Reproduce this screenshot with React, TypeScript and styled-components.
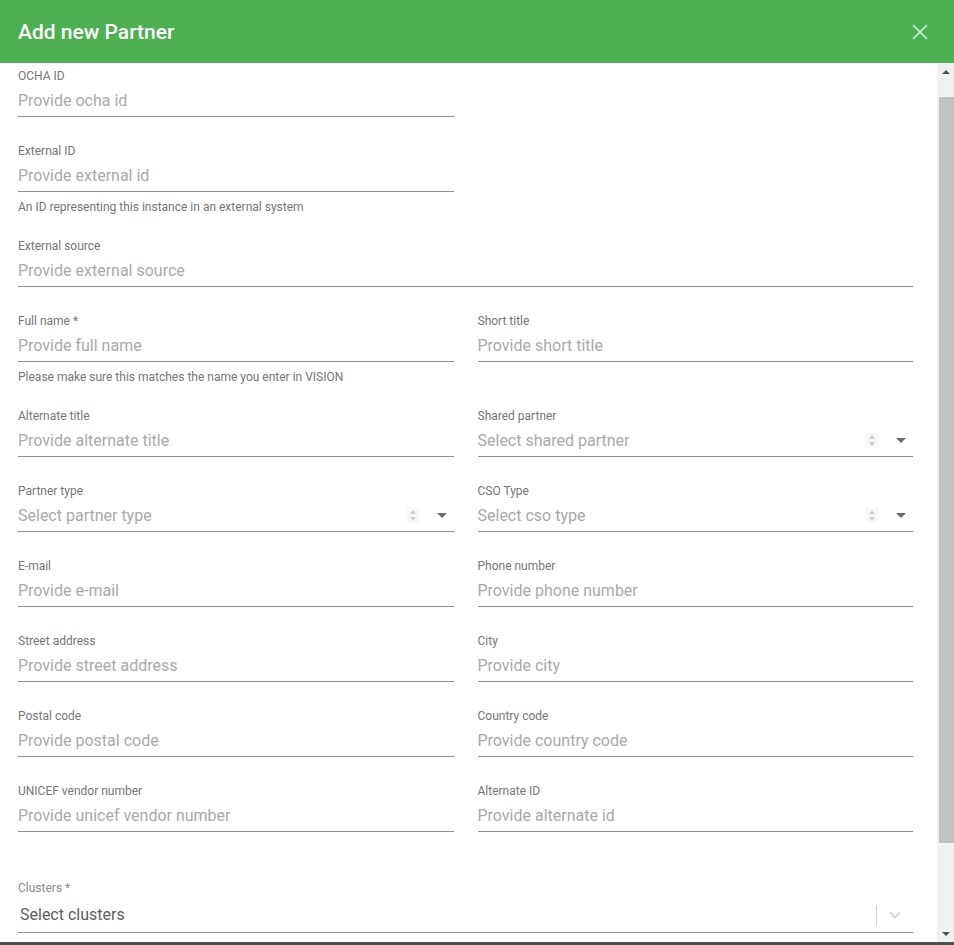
import { useEffect, useRef } from 'react';
import styled, { createGlobalStyle } from 'styled-components';

const GlobalStyle = createGlobalStyle`
  html, body {
    margin: 0;
    height: 100%;
    overflow: hidden;
    background: #fff;
  }
  #root {
    height: 100%;
  }
  * {
    box-sizing: border-box;
  }
`;

const Dialog = styled.div`
  display: flex;
  flex-direction: column;
  height: 100%;
  font-family: Roboto, 'Noto Sans', sans-serif;
`;

const Header = styled.header`
  flex: 0 0 63px;
  display: flex;
  align-items: center;
  justify-content: space-between;
  padding: 0 24px 0 18px;
  background: #4caf50;
`;

const Title = styled.h2`
  margin: 0;
  font-size: 21px;
  font-weight: 500;
  color: #fff;
`;

const CloseButton = styled.button`
  display: flex;
  align-items: center;
  justify-content: center;
  width: 20px;
  height: 20px;
  padding: 0;
  border: 0;
  background: none;
  cursor: pointer;
`;

const BodyRow = styled.div`
  flex: 1 1 auto;
  display: flex;
  min-height: 0;
`;

const Body = styled.div`
  flex: 1 1 auto;
  overflow: hidden;
  padding: 25px 24px 108px 18px;
`;

const ScrollBar = styled.div`
  flex: 0 0 17px;
  display: flex;
  flex-direction: column;
  background: #f1f1f1;
`;

const ScrollButton = styled.div`
  flex: 0 0 17px;
  display: flex;
  align-items: center;
  justify-content: center;
`;

const ScrollTrack = styled.div`
  flex: 1 1 auto;
  display: flex;
  flex-direction: column;
  padding-left: 2px;
`;

const ScrollThumb = styled.div`
  background: #c1c1c1;
`;

const BottomEdge = styled.div`
  flex: 0 0 3px;
  background: #4f4f4f;
`;

const Form = styled.div`
  display: grid;
  grid-template-columns: 1fr 1fr;
  column-gap: 24px;
`;

const FieldBox = styled.div<{ $span?: 'left' | 'full'; $gapTop?: number }>`
  grid-column: ${(p) => (p.$span === 'full' ? '1 / -1' : p.$span === 'left' ? '1' : 'auto')};
  margin-top: ${(p) => p.$gapTop ?? 0}px;
  padding-bottom: 26px;
`;

const Label = styled.label<{ $light?: boolean }>`
  display: block;
  font-size: 12px;
  line-height: 16px;
  color: ${(p) => (p.$light ? '#8a8a8a' : '#767676')};
`;

const InputRow = styled.div`
  display: flex;
  align-items: center;
  height: 29px;
  margin-top: 4px;
  padding-bottom: 4px;
  border-bottom: 1px solid #8f8f8f;
`;

const TextInput = styled.input`
  flex: 1;
  min-width: 0;
  height: 24px;
  padding: 0;
  border: 0;
  outline: none;
  background: transparent;
  font-family: inherit;
  font-size: 16px;
  color: #333;

  &::placeholder {
    color: #a9a9a9;
  }
`;

const Helper = styled.div`
  margin: 7px 0 -3px;
  font-size: 12px;
  line-height: 16px;
  color: #767676;
`;

const Spinner = styled.span`
  display: flex;
  flex-direction: column;
  align-items: center;
  justify-content: center;
  gap: 3px;
  width: 12px;
  height: 16px;
  margin-right: 13px;
  background: #f8f8f8;
`;

const Caret = styled.span`
  width: 0;
  height: 0;
  border-left: 5px solid transparent;
  border-right: 5px solid transparent;
  border-top: 5px solid #6b6b6b;
`;

const TinyArrow = styled.span<{ $up?: boolean }>`
  width: 0;
  height: 0;
  border-left: 3px solid transparent;
  border-right: 3px solid transparent;
  ${(p) => (p.$up ? 'border-bottom: 4px solid #cfcfcf;' : 'border-top: 4px solid #cfcfcf;')}
`;

const ScrollArrow = styled.span<{ $up?: boolean }>`
  width: 0;
  height: 0;
  border-left: 4px solid transparent;
  border-right: 4px solid transparent;
  ${(p) => (p.$up ? 'border-bottom: 4px solid #505050;' : 'border-top: 4px solid #505050;')}
`;

const CaretSlot = styled.span`
  display: flex;
  justify-content: center;
  width: 20px;
  margin-right: 2px;
`;

const MultiRow = styled.div`
  display: flex;
  align-items: center;
  margin-top: 5px;
  padding: 2px 0 5px 2px;
  border-bottom: 1px solid #8f8f8f;
`;

const MultiText = styled.span`
  flex: 1;
  font-size: 16px;
  line-height: 24px;
  color: #5e5e5e;
`;

const Divider = styled.span`
  width: 1px;
  height: 20px;
  background: #d0d0d0;
`;

const ChevronSlot = styled.span`
  display: flex;
  align-items: center;
  justify-content: center;
  width: 36px;
`;

type FieldDef = {
  label: string;
  placeholder: string;
  helper?: string;
  select?: boolean;
  span?: 'left' | 'full';
};

const fields: FieldDef[] = [
  { label: 'OCHA ID', placeholder: 'Provide ocha id', span: 'left' },
  {
    label: 'External ID',
    placeholder: 'Provide external id',
    helper: 'An ID representing this instance in an external system',
    span: 'left',
  },
  { label: 'External source', placeholder: 'Provide external source', span: 'full' },
  {
    label: 'Full name *',
    placeholder: 'Provide full name',
    helper: 'Please make sure this matches the name you enter in VISION',
  },
  { label: 'Short title', placeholder: 'Provide short title' },
  { label: 'Alternate title', placeholder: 'Provide alternate title' },
  { label: 'Shared partner', placeholder: 'Select shared partner', select: true },
  { label: 'Partner type', placeholder: 'Select partner type', select: true },
  { label: 'CSO Type', placeholder: 'Select cso type', select: true },
  { label: 'E-mail', placeholder: 'Provide e-mail' },
  { label: 'Phone number', placeholder: 'Provide phone number' },
  { label: 'Street address', placeholder: 'Provide street address' },
  { label: 'City', placeholder: 'Provide city' },
  { label: 'Postal code', placeholder: 'Provide postal code' },
  { label: 'Country code', placeholder: 'Provide country code' },
  { label: 'UNICEF vendor number', placeholder: 'Provide unicef vendor number' },
  { label: 'Alternate ID', placeholder: 'Provide alternate id' },
];

function Field({ f }: { f: FieldDef }) {
  return (
    <FieldBox $span={f.span}>
      <Label>{f.label}</Label>
      <InputRow>
        <TextInput placeholder={f.placeholder} readOnly={f.select} />
        {f.select && (
          <>
            <Spinner>
              <TinyArrow $up />
              <TinyArrow />
            </Spinner>
            <CaretSlot>
              <Caret />
            </CaretSlot>
          </>
        )}
      </InputRow>
      {f.helper && <Helper>{f.helper}</Helper>}
    </FieldBox>
  );
}

export default function App() {
  const bodyRef = useRef<HTMLDivElement>(null);

  useEffect(() => {
    if (bodyRef.current) bodyRef.current.scrollTop = 20;
  }, []);

  return (
    <>
      <GlobalStyle />
      <Dialog>
        <Header>
          <Title>Add new Partner</Title>
          <CloseButton aria-label="Close">
            <svg width="16" height="16" viewBox="0 0 16 16">
              <path d="M1 1L15 15M15 1L1 15" stroke="#b9e2ba" strokeWidth="1.8" />
            </svg>
          </CloseButton>
        </Header>
        <BodyRow>
          <Body ref={bodyRef}>
            <Form>
              {fields.map((f) => (
                <Field key={f.label} f={f} />
              ))}
              <FieldBox $span="full" $gapTop={22}>
                <Label $light>Clusters *</Label>
                <MultiRow>
                  <MultiText>Select clusters</MultiText>
                  <Divider />
                  <ChevronSlot>
                    <svg width="12" height="8" viewBox="0 0 12 8">
                      <path d="M1 1.5L6 6.5L11 1.5" fill="none" stroke="#cccccc" strokeWidth="1.5" />
                    </svg>
                  </ChevronSlot>
                </MultiRow>
              </FieldBox>
            </Form>
          </Body>
          <ScrollBar>
            <ScrollButton>
              <ScrollArrow $up />
            </ScrollButton>
            <ScrollTrack>
              <ScrollThumb style={{ marginTop: 17, height: 746 }} />
            </ScrollTrack>
            <ScrollButton>
              <ScrollArrow />
            </ScrollButton>
          </ScrollBar>
        </BodyRow>
        <BottomEdge />
      </Dialog>
    </>
  );
}
